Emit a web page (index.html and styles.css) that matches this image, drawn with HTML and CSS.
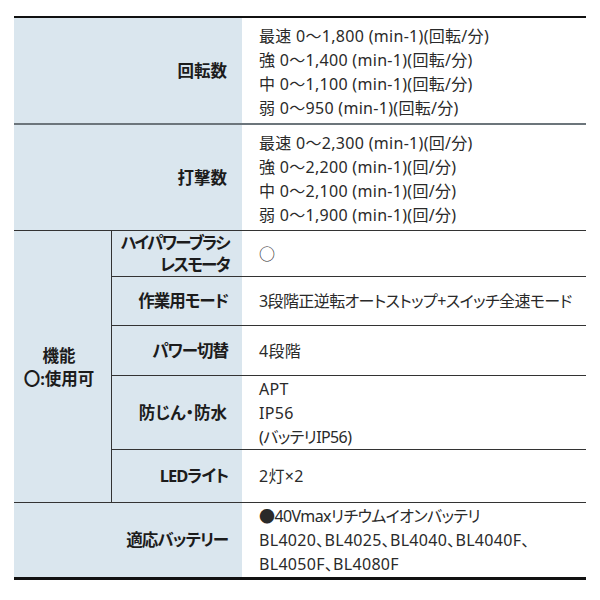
FILE: index.html
```html
<!DOCTYPE html>
<html lang="ja">
<head>
<meta charset="utf-8">
<title>仕様</title>
<link rel="stylesheet" href="styles.css">
</head>
<body>
<table class="spec">
  <colgroup>
    <col class="c-grp">
    <col class="c-sub">
    <col class="c-val">
  </colgroup>
  <tr class="r-speed">
    <th class="lbl" colspan="2">回転数</th>
    <td class="val">最速 0〜1,800 (min-1)(回転/分)<br>強 0〜1,400 (min-1)(回転/分)<br>中 0〜1,100 (min-1)(回転/分)<br>弱 0〜950 (min-1)(回転/分)</td>
  </tr>
  <tr class="r-blow">
    <th class="lbl" colspan="2">打撃数</th>
    <td class="val">最速 0〜2,300 (min-1)(回/分)<br>強 0〜2,200 (min-1)(回/分)<br>中 0〜2,100 (min-1)(回/分)<br>弱 0〜1,900 (min-1)(回/分)</td>
  </tr>
  <tr class="r-motor">
    <th class="grp" rowspan="5">機能<br>〇:使用可</th>
    <th class="lbl sub tighter">ハイパワーブラシ<br>レスモータ</th>
    <td class="val">○</td>
  </tr>
  <tr class="r-mode">
    <th class="lbl sub tight">作業用モード</th>
    <td class="val"><span class="kana">3段階正逆転オートストップ+スイッチ全速モード</span></td>
  </tr>
  <tr class="r-power">
    <th class="lbl sub tight">パワー切替</th>
    <td class="val">4段階</td>
  </tr>
  <tr class="r-dust">
    <th class="lbl sub">防じん・防水</th>
    <td class="val">APT<br>IP56<br><span class="kana">(バッテリIP56)</span></td>
  </tr>
  <tr class="r-led">
    <th class="lbl sub tight">LEDライト</th>
    <td class="val">2灯×2</td>
  </tr>
  <tr class="r-bat">
    <th class="lbl tight" colspan="2">適応バッテリー</th>
    <td class="val"><span class="kana">●40Vmaxリチウムイオンバッテリ</span><br>BL4020、BL4025、BL4040、BL4040F、<br>BL4050F、BL4080F</td>
  </tr>
</table>
</body>
</html>
```
FILE: styles.css
```css
html, body {
  margin: 0;
  padding: 0;
  background: #ffffff;
}

body {
  font-family: "Noto Sans", "Noto Sans CJK JP", sans-serif;
  font-feature-settings: "palt";
  color: #2a2a2a;
}

.spec {
  margin: 16px 0 0 14px;
  width: 572px;
  table-layout: fixed;
  border-collapse: separate;
  border-spacing: 0;
  border-top: 2px solid #111111;
}

.c-grp { width: 98px; }
.c-sub { width: 130px; }
.c-val { width: 344px; }

.spec th,
.spec td {
  padding: 0;
  vertical-align: middle;
  border-bottom: 1px solid #333333;
}

.spec .lbl {
  background: #dae6ee;
  text-align: right;
  padding: 0 15px 0 0;
  font-size: 16.5px;
  font-weight: 700;
  color: #1c1c1c;
  line-height: 22px;
  white-space: nowrap;
}

.spec .tight {
  letter-spacing: -1px;
  padding-right: 14px;
}

.spec .tighter {
  letter-spacing: -1.7px;
  padding-right: 13px;
}

.spec .grp {
  background: #dae6ee;
  border-right: 1px solid #333333;
  text-align: center;
  padding: 0 7px 0 0;
  font-size: 16.5px;
  font-weight: 700;
  color: #1c1c1c;
  line-height: 23px;
}

.spec .val {
  background: #ffffff;
  text-align: left;
  padding: 0 0 0 17px;
  font-size: 16px;
  line-height: 24px;
  letter-spacing: 0.3px;
  white-space: nowrap;
}

.kana {
  letter-spacing: -0.6px;
}

.r-speed { height: 107px; }
.spec .r-speed th,
.spec .r-speed td {
  border-bottom: 2px solid #6c757b;
}
.spec .r-speed td { padding-top: 3px; }

.r-blow { height: 106px; }
.spec .r-blow td { padding-top: 2px; }

.r-motor { height: 46px; }
.r-mode { height: 49px; }
.r-power { height: 50px; }
.r-dust { height: 74px; }
.r-led { height: 53px; }

.r-bat { height: 77px; }
.spec .r-bat th,
.spec .r-bat td {
  border-bottom: 3px solid #111111;
}
```
